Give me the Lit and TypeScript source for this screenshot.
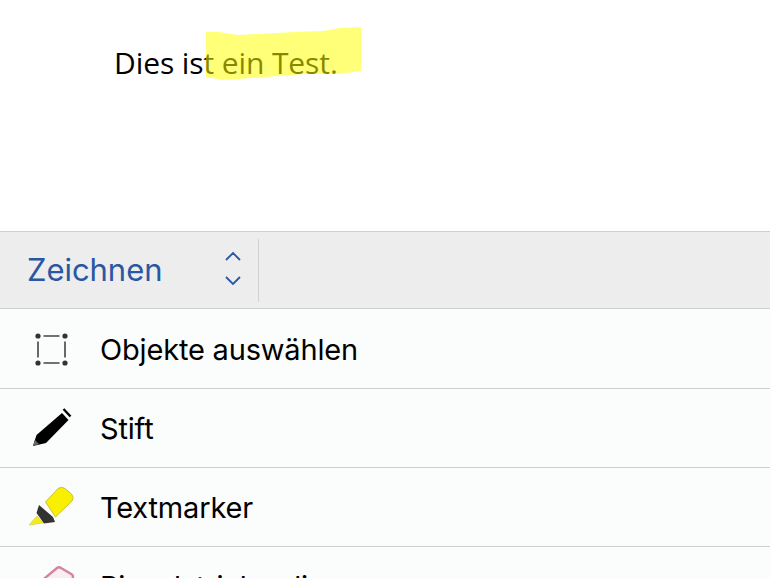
import { LitElement, html, css, svg } from "lit";
import { customElement } from "lit/decorators.js";

const selectIcon = svg`<svg class="ic" viewBox="0 0 44 44" width="44" height="44">
  <g fill="#333"><circle cx="8" cy="9" r="2.600"/><circle cx="35" cy="9" r="2.600"/><circle cx="8" cy="36" r="2.600"/><circle cx="35" cy="36" r="2.600"/></g>
  <path d="M13.500 9h16M13.500 36h16M8 14.500v16M35 14.500v16" stroke="#444" stroke-width="1.600" fill="none"/></svg>`;
const penIcon = svg`<svg class="ic" viewBox="0 0 44 44" width="44" height="44">
  <path d="M3 40 L6.500 29 L32 7 L38.500 14 L16 37 Z" fill="#000"/>
  <path d="M3 40 L5 34 L9 38 Z" fill="#666"/>
  <path d="M33.500 3 L40.500 10.500" stroke="#000" stroke-width="2.400" fill="none"/></svg>`;
const markerIcon = svg`<svg class="ic" viewBox="0 0 44 44" width="44" height="44">
  <path d="M-1 40 L7 31 L13 38 Z" fill="#f4ea1c" stroke="#c9c41a" stroke-width=".5"/>
  <path d="M9 20 L6.500 28 L14 38.500 L25 37 L23 32 Z" fill="#333"/>
  <path d="M15.500 17 L28 3.500 Q31.500 1 35 3.500 L41.500 9 Q44.500 12.500 42 16 L25.500 32 Z" fill="#f8f000" stroke="#c8c23a" stroke-width="1"/></svg>`;
const eraserIcon = svg`<svg class="ic" viewBox="0 0 44 44" width="44" height="44">
  <path d="M3 24 L27 4 Q29 2.500 31 4 L42 10.500 Q44 12.500 42 15 L20 38" fill="#f9eef1" stroke="#d683a0" stroke-width="2.400"/></svg>`;

const rows = [
  { icon: selectIcon, label: "Objekte auswählen" },
  { icon: penIcon, label: "Stift" },
  { icon: markerIcon, label: "Textmarker" },
  { icon: eraserIcon, label: "Pinselstrichradierer" },
];

@customElement("app-root")
export class AppRoot extends LitElement {
  static styles = css`
    :host { display: block; width: 770px; height: 578px; overflow: hidden; background: #fff; }
    .doc { height: 231px; box-sizing: border-box; padding: 41px 0 0 114px; position: relative; }
    .doc p { margin: 0; font: 30px/44px "Open Sans", sans-serif; color: #000; letter-spacing: -0.1px; }
    .hl { position: absolute; left: 205px; top: 27px; }
    .bar { height: 78px; box-sizing: border-box; background: #ecedec; border-top: 1px solid #cfcfcf; border-bottom: 1px solid #cfcfcf; display: flex; align-items: center; }
    .title { font: 31px "Inter", sans-serif; color: #2a57a3; margin-left: 27px; width: 194px; letter-spacing: -.05px; padding-bottom: 2px; }
    .chev { display: block; }
    .sep { width: 1px; height: 63px; background: #d0d1d2; margin-left: 13px; }
    .list { padding-top: 1px; background: #fbfcfc; }
    .row { height: 79px; box-sizing: border-box; border-bottom: 1px solid #cfcfcf; display: flex; align-items: center; padding-left: 30px; gap: 26px; font: 29px "Inter", sans-serif; color: #000; letter-spacing: -.18px; }
    .ic { display: block; flex: none; overflow: visible; }
  `;
  render() {
    return html`
      <div class="doc"><p>Dies ist ein Test.</p>
        <svg class="hl" width="160" height="56" viewBox="0 0 160 56">
          <path d="M1 5 L14 5 L33 8 L90 5 L118 4 L135 1 L156 0 L156 44 L133 47 L100 47 L60 50 L18 53 L1 50 Z" fill="rgba(255,255,0,.53)"/>
        </svg>
      </div>
      <div class="bar"><span class="title">Zeichnen</span>
        <svg class="chev" width="24" height="44" viewBox="0 0 24 44" fill="none" stroke="#2a57a3" stroke-width="1.800">
          <path d="M5 12 L12 5 L19 12M5 29 L12 36 L19 29"/></svg>
        <span class="sep"></span>
      </div>
      <div class="list">
        ${rows.map((r) => html`<div class="row">${r.icon}<span>${r.label}</span></div>`)}
      </div>
    `;
  }
}
